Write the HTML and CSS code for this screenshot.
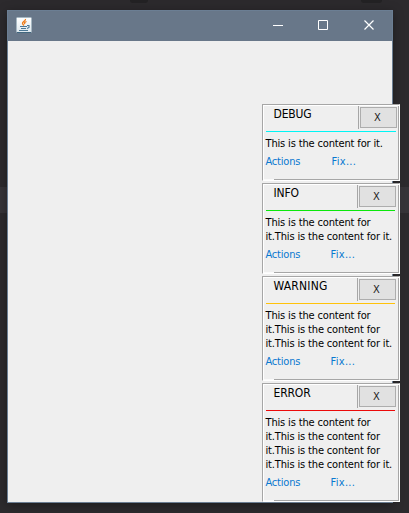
FILE: index.html
```
<!DOCTYPE html>
<html lang="en">
<head>
<meta charset="utf-8">
<title>Notifications</title>
<link rel="stylesheet" href="styles.css">
</head>
<body>
<div class="desktop">
  <div class="tab tab-left"></div>
  <div class="tab tab-right"></div>
  <div class="strip"></div>
  <div class="window">
    <div class="titlebar">
      <svg class="java" width="16" height="16" viewBox="0 0 16 16">
        <defs><linearGradient id="g" x2="0" y2="1"><stop stop-color="#fff"/><stop offset="1" stop-color="#dce6ec"/></linearGradient></defs>
        <rect x=".5" y=".5" width="15" height="15" rx="1" fill="url(#g)" stroke="#a5b7c2"/>
        <path d="M1 15.5h14" stroke="#41677f"/>
        <path d="M9.500 2C10 4 6 4.700 6.500 6.500Q6.700 7.300 8 8.500M10.500 4.500Q7.500 5.500 9 7" fill="none" stroke="#ef7a16" stroke-width="1.300"/>
        <path d="M4 9.500h7M5 11.500h5M3 13.500h9M11 8.500h2v2l-2 1" fill="none" stroke="#4c7896" stroke-width="1.100"/>
      </svg>
      <svg class="controls" width="104" height="12" viewBox="0 0 104 12">
        <path d="M0 5.500h10M45.500 .5h9v9h-9z" fill="none" stroke="#fff"/>
        <path d="M91.500 .5l9 9M100.500 .5l-9 9" stroke="#fff" stroke-width="1.200"/>
      </svg>
    </div>
  </div>
  <div class="toasts">
    <section class="toast debug">
      <header><h2>DEBUG</h2><button>X</button></header>
      <p>This is the content for it.</p>
      <footer><a class="actions">Actions</a><a class="fix">Fix...</a></footer>
    </section>
    <section class="toast info">
      <header><h2>INFO</h2><button>X</button></header>
      <p>This is the content for<br>it.This is the content for it.</p>
      <footer><a class="actions">Actions</a><a class="fix">Fix...</a></footer>
    </section>
    <section class="toast warning">
      <header><h2>WARNING</h2><button>X</button></header>
      <p>This is the content for<br>it.This is the content for<br>it.This is the content for it.</p>
      <footer><a class="actions">Actions</a><a class="fix">Fix...</a></footer>
    </section>
    <section class="toast error">
      <header><h2>ERROR</h2><button>X</button></header>
      <p>This is the content for<br>it.This is the content for<br>it.This is the content for<br>it.This is the content for it.</p>
      <footer><a class="actions">Actions</a><a class="fix">Fix...</a></footer>
    </section>
  </div>
</div>
</body>
</html>
```
FILE: styles.css
```
* { box-sizing: border-box; }
body { margin: 0; font-family: "DejaVu Sans Condensed", "DejaVu Sans", sans-serif; font-stretch: condensed; }
.desktop { position: relative; width: 409px; height: 513px; padding: 10px 0 0 7px; overflow: hidden; background: #2c2a2d; }
.tab { position: absolute; top: 0; height: 3px; background: #232224; border-radius: 0 0 3px 3px; }
.tab-left { left: 130px; width: 18px; }
.tab-right { left: 361px; width: 21px; }
.strip { position: absolute; left: 0; top: 187px; width: 409px; height: 26px; background: #363438; }
.window { position: relative; width: 386px; height: 493px; background: #efefef; border: 1px solid #6b7e93; box-shadow: 0 2px 10px rgba(0, 0, 0, .35); }
.titlebar { display: flex; justify-content: space-between; height: 30px; padding: 6px 14px 0 8px; background: #687789; }
.controls { margin: 3px 1px 0 0; }
.toasts { position: absolute; left: 262px; top: 104px; width: 138px; display: flex; flex-direction: column; gap: 2px; }
.toast { position: relative; background: #efefef; border: 1px solid #a6a6a6; border-right-color: #fff; border-bottom-color: #fff; box-shadow: inset 1px 1px #fff, inset -1px -1px #a6a6a6; padding: 1px 2px 0 3px; color: #000; }
.toast::after { content: ""; position: absolute; left: 1px; bottom: 0; width: 10px; height: 1px; background: #fafafa; }
.debug { height: 77px; --line: #00f5f5; }
.info { height: 91px; --line: #0be80b; }
.warning { height: 105px; --line: #ffc20a; }
.error { height: 119px; --line: #ec0a0a; }
.toast header { display: flex; width: 129px; height: 26px; border-bottom: 1px solid var(--line); }
.debug header { width: 130px; }
.toast h2 { flex: 1; margin: 0 -1px 0 0; padding: 1px 0 0 7.5px; font-size: 12px; font-weight: 400; line-height: 15px; letter-spacing: -.15px; white-space: nowrap; height: 23px; border-right: 1px solid #a6a6a6; }
.warning h2 { letter-spacing: .2px; }
.toast button { width: 37px; height: 21px; margin: 1px 0 0 1px; padding: 0 2px 0 0; background: #e1e1e1; border: 1px solid #adadad; color: #222; font: inherit; font-size: 11px; line-height: 17px; position: relative; left: 1px; }
.toast p { margin: 5px 0 0 -.5px; font-size: 11px; line-height: 14px; white-space: nowrap; letter-spacing: -.15px; }
.toast footer { display: flex; margin: 4px 0 0 -.5px; font-size: 11px; line-height: 14px; color: #0a78d0; letter-spacing: -.2px; }
.actions { width: 65px; }
.debug .actions { width: 66px; }
.fix { letter-spacing: .3px; }
```
